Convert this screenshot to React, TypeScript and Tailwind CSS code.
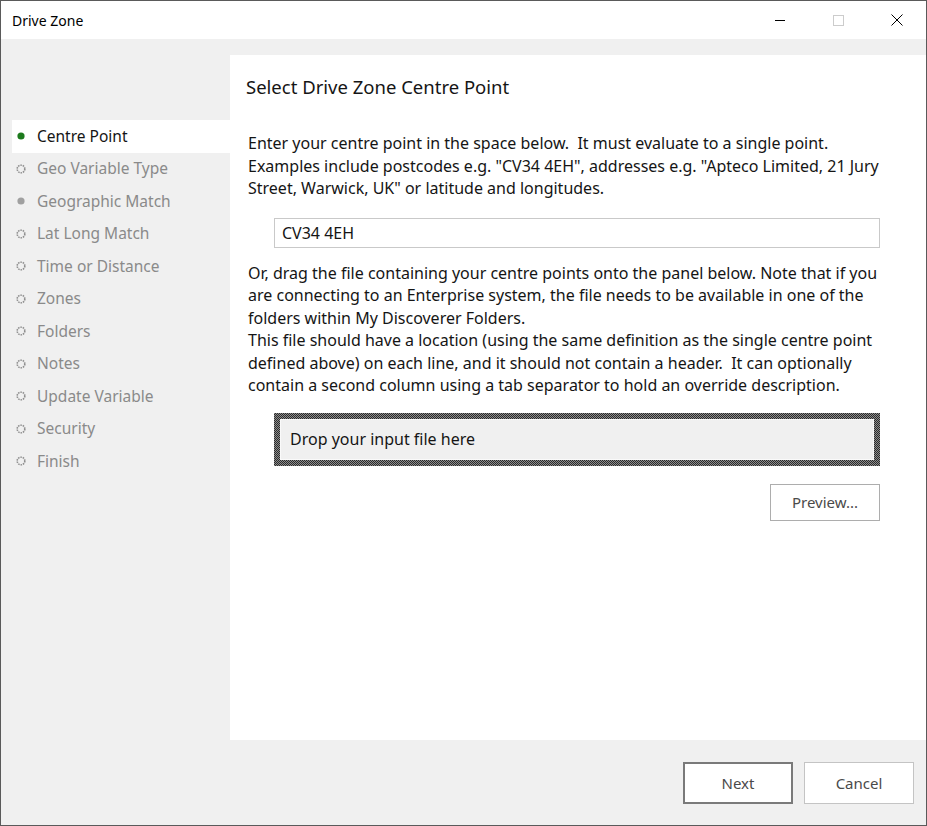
import * as React from "react";

const steps = [
  { label: "Centre Point", state: "current" },
  { label: "Geo Variable Type", state: "todo" },
  { label: "Geographic Match", state: "skip" },
  { label: "Lat Long Match", state: "todo" },
  { label: "Time or Distance", state: "todo" },
  { label: "Zones", state: "todo" },
  { label: "Folders", state: "todo" },
  { label: "Notes", state: "todo" },
  { label: "Update Variable", state: "todo" },
  { label: "Security", state: "todo" },
  { label: "Finish", state: "todo" },
];

function StepDot({ state }: { state: string }) {
  if (state === "current") {
    return (
      <svg width="12" height="12" viewBox="0 0 12 12">
        <circle cx="6" cy="6" r="3.6" fill="#1c7a1c" />
      </svg>
    );
  }
  if (state === "skip") {
    return (
      <svg width="12" height="12" viewBox="0 0 12 12">
        <circle cx="6" cy="6" r="3.6" fill="#a0a0a0" />
      </svg>
    );
  }
  return (
    <svg width="12" height="12" viewBox="0 0 12 12">
      <circle cx="6" cy="6" r="3.8" fill="none" stroke="#8e8e8e" strokeWidth="1.6" strokeDasharray="1.5 0.9" />
    </svg>
  );
}

export default function App() {
  return (
    <div
      className="w-[927px] h-[826px] flex flex-col border border-[#5a5a5a] bg-[#f0f0f0] text-[#151515]"
      style={{ fontFamily: '"Noto Sans", "Open Sans", sans-serif' }}
    >
      {/* Title bar */}
      <div className="h-[38px] shrink-0 bg-white flex items-center">
        <div className="pl-[11px] text-[14px] text-black flex-1">Drive Zone</div>
        <div className="w-[58.5px] h-[38px] flex items-center justify-center">
          <div className="w-[10px] h-px bg-black" />
        </div>
        <div className="w-[58.5px] h-[38px] flex items-center justify-center">
          <div className="w-[11px] h-[11px] border border-[#cccccc]" />
        </div>
        <div className="w-[58.5px] h-[38px] flex items-center justify-center">
          <svg width="12" height="12" viewBox="0 0 12 12">
            <path d="M0.5 0.5 L11.5 11.5 M11.5 0.5 L0.5 11.5" stroke="#000" strokeWidth="1" />
          </svg>
        </div>
      </div>

      {/* Body */}
      <div className="flex pt-[16px]">
        {/* Sidebar */}
        <div className="w-[229px] shrink-0 pt-[65px] pl-[11px]">
          {steps.map((s) => (
            <div
              key={s.label}
              className={
                s.state === "current"
                  ? "h-[32.5px] flex items-center bg-white text-[#151515] text-[15.5px]"
                  : "h-[32.5px] flex items-center text-[#8a8a8a] text-[15.5px]"
              }
            >
              <div className="w-[18px] mr-[7px] flex justify-center">
                <StepDot state={s.state} />
              </div>
              <span>{s.label}</span>
            </div>
          ))}
        </div>

        {/* Content panel */}
        <div className="flex-1 h-[685px] bg-white pl-[16px] pr-[46px] pt-[19px]">
          <h1 className="text-[18.5px] leading-[26px] text-[#151515]">Select Drive Zone Centre Point</h1>

          <p className="mt-[32px] pl-[2px] text-[16px] leading-[22.5px] whitespace-pre">
            {"Enter your centre point in the space below.  It must evaluate to a single point.\nExamples include postcodes e.g. \"CV34 4EH\", addresses e.g. \"Apteco Limited, 21 Jury\nStreet, Warwick, UK\" or latitude and longitudes."}
          </p>

          <div className="mt-[18px] ml-[28px] h-[30px] border border-[#c9c9c9] flex items-center pl-[7px] text-[16px]">
            CV34 4EH
          </div>

          <p className="mt-[14px] pl-[2px] text-[16px] leading-[22.5px] whitespace-pre">
            {"Or, drag the file containing your centre points onto the panel below. Note that if you\nare connecting to an Enterprise system, the file needs to be available in one of the\nfolders within My Discoverer Folders.\nThis file should have a location (using the same definition as the single centre point\ndefined above) on each line, and it should not contain a header.  It can optionally\ncontain a second column using a tab separator to hold an override description."}
          </p>

          <div className="mt-[16px] ml-[28px] h-[53px] p-[6px] bg-[repeating-conic-gradient(#2a2a2a_0_25%,#8c8c8c_0_50%)] bg-[length:2px_2px]">
            <div className="h-full bg-[#f0f0f0] border border-[#fafafa] flex items-center pl-[9px] text-[16px]">
              Drop your input file here
            </div>
          </div>

          <div className="mt-[18px] flex justify-end">
            <button className="w-[110px] h-[37px] border border-[#adadad] bg-white text-[15px] text-[#4a4a4a]">
              Preview...
            </button>
          </div>
        </div>
      </div>

      {/* Footer */}
      <div className="flex justify-end gap-[11px] pt-[22px] pr-[12px]">
        <button className="w-[110px] h-[42px] border-2 border-[#7a7a7a] bg-white text-[15px] text-[#4a4a4a]">
          Next
        </button>
        <button className="w-[110px] h-[42px] border border-[#c4c4c4] bg-white text-[15px] text-[#4a4a4a]">
          Cancel
        </button>
      </div>
    </div>
  );
}
